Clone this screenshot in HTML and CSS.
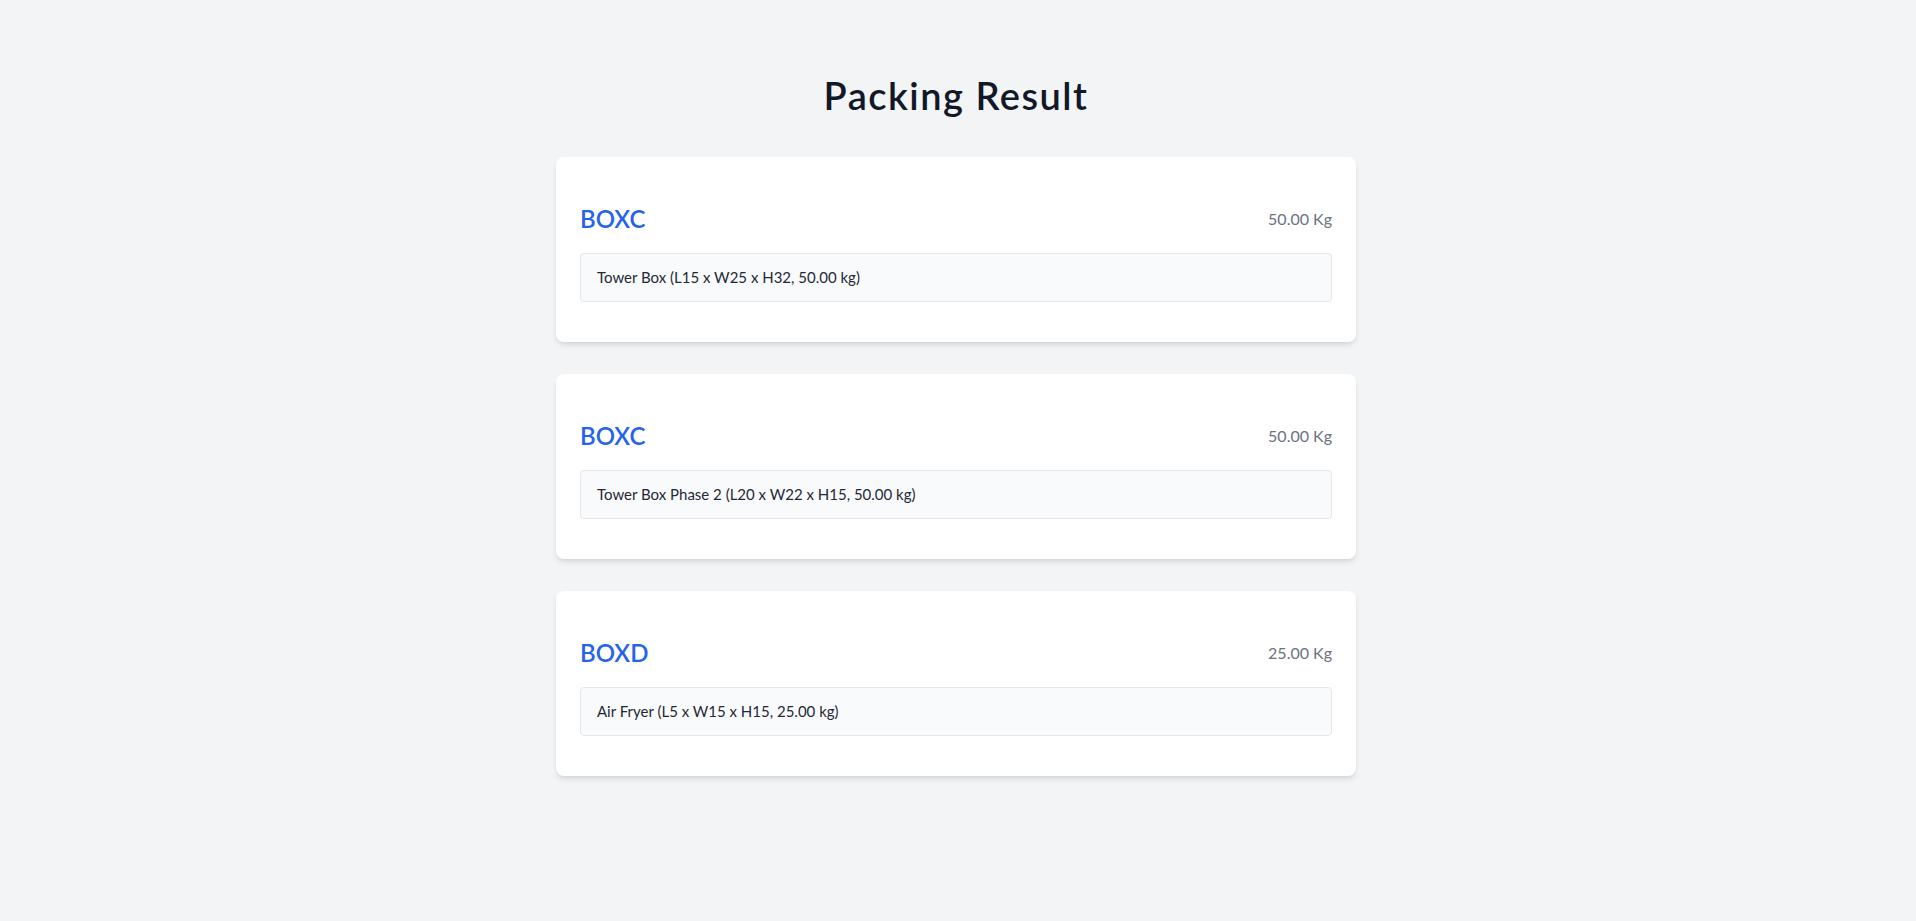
FILE: index.html
```html
<!DOCTYPE html>
<html lang="en">
<head>
<meta charset="utf-8">
<title>Packing Result</title>
<link rel="stylesheet" href="styles.css">
</head>
<body>
<main class="page">
  <h1 class="title">Packing Result</h1>
  <div class="cards">
    <section class="card">
      <div class="card-head">
        <h2 class="box-name">BOXC</h2>
        <span class="box-weight">50.00 Kg</span>
      </div>
      <ul class="items">
        <li class="item">Tower Box (L15 x W25 x H32, 50.00 kg)</li>
      </ul>
    </section>
    <section class="card">
      <div class="card-head">
        <h2 class="box-name">BOXC</h2>
        <span class="box-weight">50.00 Kg</span>
      </div>
      <ul class="items">
        <li class="item">Tower Box Phase 2 (L20 x W22 x H15, 50.00 kg)</li>
      </ul>
    </section>
    <section class="card">
      <div class="card-head">
        <h2 class="box-name">BOXD</h2>
        <span class="box-weight">25.00 Kg</span>
      </div>
      <ul class="items">
        <li class="item">Air Fryer (L5 x W15 x H15, 25.00 kg)</li>
      </ul>
    </section>
  </div>
</main>
</body>
</html>
```

FILE: styles.css
```css
* { box-sizing: border-box; }

html, body {
  margin: 0;
  padding: 0;
  background: #f3f4f6;
  font-family: "Lato", "Noto Sans", sans-serif;
  color: #1f2937;
}

.page {
  padding: 75px 4px 40px 0;
}

.title {
  margin: 0 0 42px;
  text-align: center;
  font-size: 38px;
  line-height: 40px;
  letter-spacing: 1.5px;
  font-weight: 600;
  color: #111827;
}

.cards {
  width: 800px;
  margin: 0 auto;
  display: flex;
  flex-direction: column;
  gap: 32px;
}

.card {
  background: #ffffff;
  border-radius: 8px;
  padding: 24px;
  box-shadow: 0 4px 6px -1px rgba(0, 0, 0, 0.1), 0 2px 4px -2px rgba(0, 0, 0, 0.08);
}

.card-head {
  display: flex;
  justify-content: space-between;
  align-items: center;
  padding-top: 22px;
  margin-bottom: 18px;
  height: 54px;
}

.box-name {
  margin: 0;
  font-size: 24px;
  line-height: 32px;
  font-weight: 600;
  color: #2563eb;
}

.box-weight {
  font-size: 16px;
  line-height: 24px;
  color: #6b7280;
}

.items {
  list-style: none;
  margin: 0 0 16px;
  padding: 0;
}

.item {
  background: #f9fafb;
  border: 1px solid #e5e7eb;
  border-radius: 4px;
  padding: 11px 16px 12px;
  font-size: 15px;
  line-height: 24px;
  color: #1f2937;
}
```
